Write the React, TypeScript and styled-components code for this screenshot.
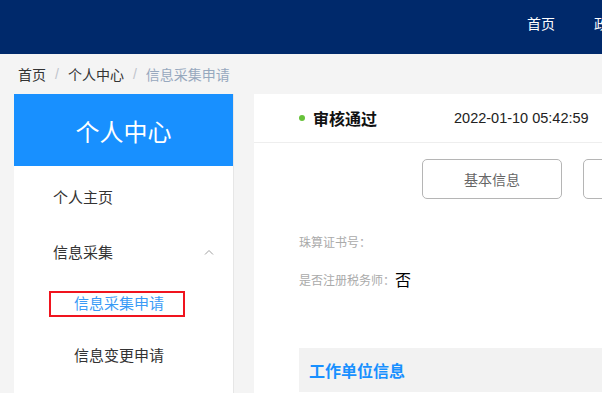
import styled, { createGlobalStyle } from 'styled-components';

const GlobalStyle = createGlobalStyle`
  html, body {
    margin: 0;
    padding: 0;
    background: #f4f4f4;
    font-family: "Liberation Sans", Arial, "Noto Sans CJK SC", sans-serif;
    overflow: hidden;
  }
  * {
    box-sizing: border-box;
  }
`;

const Page = styled.div`
  width: 602px;
  height: 393px;
  overflow: hidden;
`;

const TopBar = styled.header`
  height: 54px;
  background: #00296b;
  display: flex;
  align-items: flex-start;
  padding: 15px 0 0 527px;
  white-space: nowrap;
`;

const NavItem = styled.a`
  color: #fff;
  font-size: 14px;
  line-height: 18px;
  margin-right: 39px;
  text-decoration: none;
`;

const Crumbs = styled.div`
  height: 40px;
  display: flex;
  align-items: center;
  padding-left: 18px;
  font-size: 14px;
`;

const Crumb = styled.span<{ $last?: boolean }>`
  color: ${(p) => (p.$last ? '#97a8be' : '#333')};
`;

const Sep = styled.span`
  color: #c0c4cc;
  margin: 0 9px;
`;

const Body = styled.div`
  display: flex;
  gap: 20px;
  padding-left: 14px;
  height: 299px;
`;

const Sidebar = styled.aside`
  flex: 0 0 220px;
  background: #fff;
  border-right: 1px solid #e6e6e6;
`;

const SideTitle = styled.div`
  height: 72px;
  background: #1890ff;
  color: #fff;
  font-size: 24px;
  display: flex;
  align-items: center;
  justify-content: center;
`;

const Menu = styled.ul`
  list-style: none;
  margin: 0;
  padding: 3px 0 0;
`;

const MenuItem = styled.li`
  height: 55px;
  display: flex;
  align-items: center;
  justify-content: space-between;
  padding: 0 19px 0 39px;
  font-size: 15px;
  color: #333;
`;

const SubItem = styled.li<{ $indent?: number }>`
  height: 50px;
  display: flex;
  align-items: center;
  padding-left: ${(p) => p.$indent ?? 35}px;
  font-size: 15px;
  color: #333;
`;

const ActiveLink = styled.span`
  display: inline-block;
  color: #3a9bf6;
  border: 2px solid #f0141e;
  padding: 1px 19px 1px 23px;
  line-height: 20px;
`;

const Main = styled.main`
  flex: 1;
  min-width: 0;
  background: #fff;
  overflow: hidden;
`;

const StatusRow = styled.div`
  height: 49px;
  border-bottom: 1px solid #eee;
  display: flex;
  align-items: center;
  padding-left: 45px;
  white-space: nowrap;
`;

const Dot = styled.span`
  width: 6px;
  height: 6px;
  border-radius: 50%;
  background: #67c23a;
  margin-right: 8px;
`;

const StatusText = styled.span`
  font-size: 16px;
  font-weight: bold;
  color: #111;
`;

const Time = styled.span`
  font-size: 14.5px;
  color: #222;
  margin-left: 77px;
`;

const Tabs = styled.div`
  display: flex;
  gap: 21px;
  padding: 16px 0 0 168px;
`;

const TabButton = styled.button`
  flex: 0 0 140px;
  height: 40px;
  border: 1px solid #b5b5b5;
  border-radius: 5px;
  background: #fff;
  color: #666;
  font-size: 14px;
  font-family: inherit;
`;

const Fields = styled.div`
  padding: 23px 0 0 45px;
`;

const Field = styled.div`
  height: 38px;
  display: flex;
  align-items: center;
  font-size: 12px;
  color: #aaa;
`;

const Value = styled.span`
  font-size: 16px;
  color: #000;
`;

const Section = styled.div`
  margin: 50px 0 0 45px;
  background: #f2f2f2;
  height: 44px;
  display: flex;
  align-items: center;
  padding-left: 10px;
  font-size: 16px;
  font-weight: bold;
  color: #1890ff;
`;

function ChevronUp() {
  return (
    <svg width="10" height="6" viewBox="0 0 10 6" fill="none">
      <path d="M1 5.5L5 1.5L9 5.5" stroke="#a0a0a0" strokeWidth="1" />
    </svg>
  );
}

export default function App() {
  return (
    <Page>
      <GlobalStyle />
      <TopBar>
        <NavItem>首页</NavItem>
        <NavItem>政策法规</NavItem>
      </TopBar>
      <Crumbs>
        <Crumb>首页</Crumb>
        <Sep>/</Sep>
        <Crumb>个人中心</Crumb>
        <Sep>/</Sep>
        <Crumb $last>信息采集申请</Crumb>
      </Crumbs>
      <Body>
        <Sidebar>
          <SideTitle>个人中心</SideTitle>
          <Menu>
            <MenuItem>个人主页</MenuItem>
            <MenuItem>
              信息采集
              <ChevronUp />
            </MenuItem>
            <SubItem>
              <ActiveLink>信息采集申请</ActiveLink>
            </SubItem>
            <SubItem $indent={60}>信息变更申请</SubItem>
          </Menu>
        </Sidebar>
        <Main>
          <StatusRow>
            <Dot />
            <StatusText>审核通过</StatusText>
            <Time>2022-01-10 05:42:59</Time>
          </StatusRow>
          <Tabs>
            <TabButton>基本信息</TabButton>
            <TabButton>从业信息</TabButton>
          </Tabs>
          <Fields>
            <Field>珠算证书号：</Field>
            <Field>
              是否注册税务师：<Value>否</Value>
            </Field>
          </Fields>
          <Section>工作单位信息</Section>
        </Main>
      </Body>
    </Page>
  );
}
